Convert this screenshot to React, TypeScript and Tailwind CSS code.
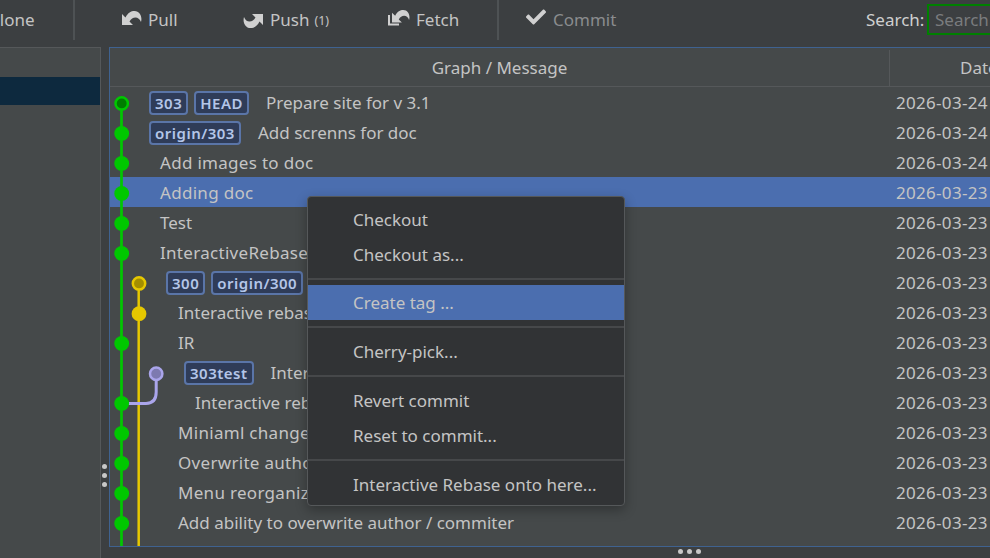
import type { ReactNode } from "react";
import { FaCheck } from "react-icons/fa";

type Row = { msg: string; pad: number; date: string; tags?: string[]; wide?: boolean };

const rows: Row[] = [
  { msg: "Prepare site for v 3.1", pad: 39, date: "2026-03-24", tags: ["303", "HEAD"] },
  { msg: "Add screnns for doc", pad: 39, date: "2026-03-24", tags: ["origin/303"] },
  { msg: "Add images to doc", pad: 50, date: "2026-03-24", wide: true },
  { msg: "Adding doc", pad: 50, date: "2026-03-23", wide: true },
  { msg: "Test", pad: 50, date: "2026-03-23" },
  { msg: "InteractiveRebase and more", pad: 50, date: "2026-03-23", wide: true },
  { msg: "Interactive rebase", pad: 56, date: "2026-03-23", tags: ["300", "origin/300"] },
  { msg: "Interactive rebase", pad: 68, date: "2026-03-23" },
  { msg: "IR", pad: 68, date: "2026-03-23" },
  { msg: "Interactive", pad: 74, date: "2026-03-23", tags: ["303test"] },
  { msg: "Interactive rebase", pad: 85, date: "2026-03-23" },
  { msg: "Miniaml changes", pad: 68, date: "2026-03-23", wide: true },
  { msg: "Overwrite author", pad: 68, date: "2026-03-23", wide: true },
  { msg: "Menu reorganization", pad: 68, date: "2026-03-23", wide: true },
  { msg: "Add ability to overwrite author / commiter", pad: 68, date: "2026-03-23" },
];

const UNDO =
  "M0 3V14H11L7.500 10.500C9 8 11 6.500 13.500 6.500C15.800 6.500 17.800 8 19 11C20.500 6 18 0 12.500 0C9 0 6 1.500 3.500 6.500Z";

function PullIcon() {
  return (
    <svg width="20" height="15" viewBox="0 0 20 15" className="mb-[4px] mr-[6px]" fill="#d0d0d0">
      <path d={UNDO} />
    </svg>
  );
}

function PushIcon() {
  return (
    <svg width="20" height="15" viewBox="0 0 20 15" className="mr-[7px] rotate-180" fill="#d0d0d0">
      <path d={UNDO} />
    </svg>
  );
}

function FetchIcon() {
  return (
    <svg width="22" height="16" viewBox="0 0 22 16" className="mb-[5px] mr-[6px]" fill="#d0d0d0">
      <path d="M0 5V15.500H11V13.500H2V5Z" />
      <g transform="translate(4,0) scale(0.9)">
        <path d={UNDO} />
      </g>
    </svg>
  );
}

function Dots({ vertical }: { vertical?: boolean }) {
  return (
    <div className={vertical ? "flex flex-col gap-[4px]" : "flex gap-[4px]"}>
      <span className="size-[5px] rounded-full bg-[#c8c8c8]" />
      <span className="size-[5px] rounded-full bg-[#c8c8c8]" />
      <span className="size-[5px] rounded-full bg-[#c8c8c8]" />
    </div>
  );
}

function Tag({ t }: { t: string }) {
  return (
    <span className="flex h-[24px] items-center rounded-[4px] border-2 border-[#5a75a8] bg-[#2f3c58] px-[4px] text-[15px] font-semibold tracking-[0.5px] text-[#b4c6e8]">
      {t}
    </span>
  );
}

function Graph() {
  const green = [103.4, 133.4, 163.4, 193.4, 223.4, 253.4, 343.4, 403.4, 433.4, 463.4, 493.4, 523.4];
  return (
    <svg className="absolute left-0 top-0" width="60" height="459" viewBox="0 0 60 459">
      <g transform="translate(-110,-87)">
        <path d="M121.500 103V546" stroke="#00c800" strokeWidth="2.700" fill="none" />
        <path d="M138.700 284V546" stroke="#e6c800" strokeWidth="2.500" fill="none" />
        <path d="M156.200 374V392Q156.200 403.400 146 403.400H122" stroke="#aaa5eb" strokeWidth="3" fill="none" />
        {green.map((y, i) =>
          i === 0 ? (
            <circle key={y} cx="121.700" cy={y} r="6.200" fill="#007d00" stroke="#00c800" strokeWidth="2.500" />
          ) : (
            <circle key={y} cx="121.700" cy={y} r="7.400" fill="#00c800" />
          ),
        )}
        <circle cx="139" cy="283.400" r="6.200" fill="#a38e00" stroke="#e6c800" strokeWidth="2.500" />
        <circle cx="139" cy="313.700" r="7.400" fill="#e6c800" />
        <circle cx="156.200" cy="373.700" r="6.200" fill="#7d7ab0" stroke="#aaa5eb" strokeWidth="2.500" />
      </g>
    </svg>
  );
}

function MenuItem({ label, active }: { label: string; active?: boolean }) {
  return (
    <div className={`flex h-[35px] items-center pl-[45px] ${active ? "bg-[#4b6eaf]" : ""}`}>{label}</div>
  );
}

function Sep({ className }: { className: string }) {
  return <div className={`h-[2px] bg-[#46484a] ${className}`} />;
}

function Tool({ icon, label, extra, className }: { icon: ReactNode; label: string; extra?: string; className: string }) {
  return (
    <div className={`flex items-center ${className}`}>
      {icon}
      <span>{label}</span>
      {extra && <span className="ml-[5px] mt-[2px] text-[12.5px]">{extra}</span>}
    </div>
  );
}

export default function App() {
  return (
    <div
      className="flex h-[558px] w-[990px] flex-col overflow-hidden bg-[#3c3f41] text-[17px] text-[#c4c4c4]"
      style={{ fontFamily: '"Noto Sans", sans-serif' }}
    >
      <header className="flex h-[47px] shrink-0">
        <div className="flex h-[40px] flex-1 items-center">
          <div className="ml-[-11px] w-[84px] shrink-0">Clone</div>
          <div className="h-[40px] w-[2px] shrink-0 bg-[#4e5254]" />
          <Tool className="ml-[47px] w-[121px] shrink-0" label="Pull" icon={<PullIcon />} />
          <Tool className="w-[145px] shrink-0" label="Push" extra="(1)" icon={<PushIcon />} />
          <Tool className="w-[109px] shrink-0" label="Fetch" icon={<FetchIcon />} />
          <div className="h-[40px] w-[2px] shrink-0 bg-[#4e5254]" />
          <Tool
            className="ml-[27px] w-[340px] shrink-0 text-[#8a8c8e]"
            label="Commit"
            icon={<FaCheck className="mb-[7px] mr-[7px] size-[20px] text-[#d0d0d0]" />}
          />
          <span className="w-[61px] shrink-0 text-[#d0d0d0]">Search:</span>
          <div className="mb-[1px] flex h-[31px] w-[80px] shrink-0 items-center border-2 border-[#008000] pl-[6px] text-[#7a7c7e]">
            Search
          </div>
        </div>
      </header>

      <div className="flex min-h-0 flex-1">
        <aside className="relative flex w-[101px] shrink-0 flex-col border-r border-t border-[#55585a] bg-[#45494a] pt-[29px]">
          <div className="h-[28px] bg-[#0d293e]" />
          <div className="absolute -right-[7px] top-[416px]">
            <Dots vertical />
          </div>
        </aside>

        <main className="relative mb-[11px] ml-[8px] min-w-0 flex-1 border border-r-0 border-[#3f6290] bg-[#45494a]">
          <div className="flex h-[39px] border-b border-[#55585a] pt-[2px]">
            <div className="flex w-[780px] shrink-0 items-center justify-center border-r border-[#55585a]">
              Graph / Message
            </div>
            <div className="flex shrink-0 items-center pl-[70px]">Date</div>
          </div>

          <div className="relative">
            {rows.map((r, i) => (
              <div key={i} className={`flex h-[30px] items-center whitespace-nowrap pt-[2px] ${i === 3 ? "bg-[#4b6eaf]" : ""}`}>
                <div className="flex w-[786px] shrink-0 items-center gap-[6px]" style={{ paddingLeft: r.pad }}>
                  {r.tags?.map((t) => <Tag key={t} t={t} />)}
                  <span className={`${r.tags ? "ml-[11px]" : ""} ${r.wide ? "tracking-[0.3px]" : ""}`}>{r.msg}</span>
                </div>
                <div className="tracking-[0.3px]">{r.date}</div>
              </div>
            ))}
            <Graph />
          </div>

          <div className="absolute bottom-[-8px] left-[568px]">
            <Dots />
          </div>

          <div className="absolute left-[197px] top-[148px] w-[318px] rounded-[4px] border border-[#55585a] bg-[#313335] pb-[3px] pt-[5px] shadow-[0_4px_12px_rgba(0,0,0,0.3)]">
            <MenuItem label="Checkout" />
            <MenuItem label="Checkout as..." />
            <Sep className="mb-[5px] mt-[6px]" />
            <MenuItem label="Create tag ..." active />
            <Sep className="my-[6px]" />
            <MenuItem label="Cherry-pick..." />
            <Sep className="my-[6px]" />
            <MenuItem label="Revert commit" />
            <MenuItem label="Reset to commit..." />
            <Sep className="my-[6px]" />
            <MenuItem label="Interactive Rebase onto here..." />
          </div>
        </main>
      </div>
    </div>
  );
}
